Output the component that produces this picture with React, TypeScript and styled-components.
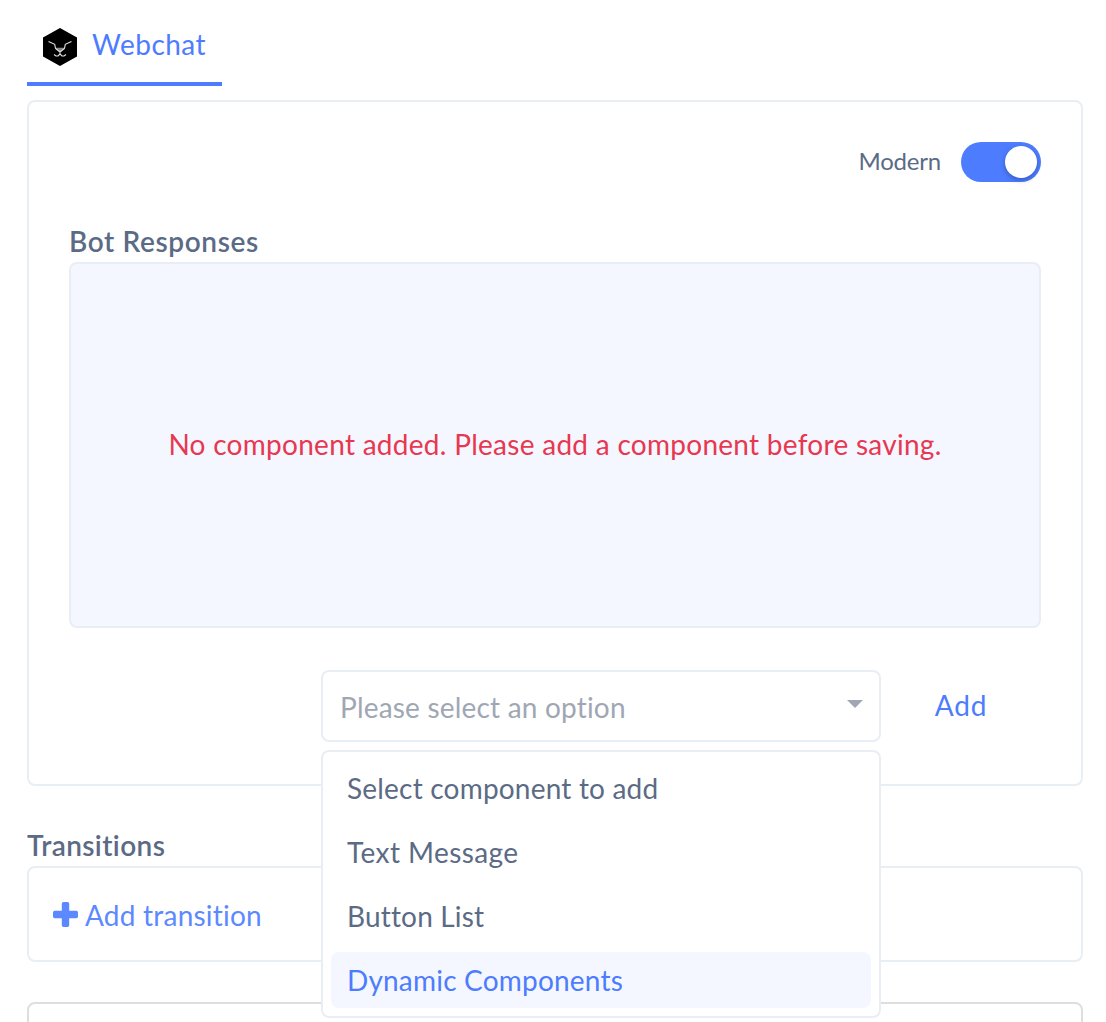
import React, { useState } from "react";
import styled, { createGlobalStyle } from "styled-components";

const ink = "#5b6b85";
const blue = "#4d7cfe";
const line = "#e9edf4";
const tint = "#f4f7ff";

const GlobalStyle = createGlobalStyle`
  * { box-sizing: border-box; }
  body { margin: 0; background: #fff; }
`;

const Page = styled.main`
  height: 1022px;
  overflow: hidden;
  padding: 0 23px 0 27px;
  display: flex;
  flex-direction: column;
  background: #fff;
  color: ${ink};
  font-family: Lato, "Open Sans", sans-serif;
  font-size: 28px;
  line-height: 34px;
  white-space: nowrap;
`;

const Label = styled.span<{ $spacing?: number }>`
  letter-spacing: ${(p) => p.$spacing ?? 0}px;
`;

const Tabs = styled.nav`
  display: flex;
  margin-bottom: 14px;
`;

const Tab = styled.div`
  display: flex;
  width: 195px;
  height: 86px;
  padding: 27px 0 0 15px;
  gap: 14px;
  border-bottom: 4px solid ${blue};
  color: ${blue};
`;

const Panel = styled.section`
  height: 686px;
  padding: 40px;
  border: 2px solid ${line};
  border-radius: 8px;
  flex: none;
`;

const ModeRow = styled.div`
  display: flex;
  justify-content: flex-end;
  align-items: center;
  gap: 20px;
  height: 40px;
  font-size: 24px;

  ${Label} { padding-bottom: 2px; }
`;

const Switch = styled.button`
  display: flex;
  justify-content: flex-end;
  width: 80px;
  height: 40px;
  padding: 4px;
  border: 0;
  border-radius: 20px;
  background: ${blue};
`;

const Knob = styled.span`
  width: 32px;
  height: 32px;
  border-radius: 50%;
  background: #fff;
  box-shadow: 0 2px 5px rgba(20, 40, 110, 0.4);
`;

const Heading = styled.h2`
  margin: 42px 0 4px;
  font-size: 28px;
  line-height: 34px;
  font-weight: 600;
`;

const EmptyState = styled.div`
  display: flex;
  align-items: center;
  justify-content: center;
  height: 366px;
  padding-bottom: 2px;
  border: 2px solid ${line};
  border-radius: 8px;
  background: ${tint};
  color: #e8384f;
`;

const AddRow = styled.div`
  display: flex;
  justify-content: flex-end;
  align-items: flex-start;
  margin-top: 42px;
`;

const SelectWrap = styled.div`
  position: relative;
  width: 560px;
`;

const SelectBox = styled.div`
  display: flex;
  align-items: center;
  justify-content: space-between;
  height: 72px;
  padding: 2px 16px 0 17px;
  border: 2px solid ${line};
  border-radius: 8px;
  color: #a0a7b4;
`;

const Caret = styled.span`
  border: 8px solid transparent;
  border-top-color: #a0a7b4;
  border-bottom: 0;
  margin-bottom: 6px;
`;

const Menu = styled.ul`
  position: absolute;
  z-index: 2;
  top: 80px;
  left: 0;
  width: 560px;
  margin: 0;
  padding: 8px;
  display: flex;
  flex-direction: column;
  gap: 8px;
  list-style: none;
  background: #fff;
  border: 2px solid ${line};
  border-radius: 8px;
`;

const Option = styled.li<{ $active: boolean }>`
  display: flex;
  align-items: center;
  height: 56px;
  padding: 0 16px 1px;
  border-radius: 8px;
  color: ${(p) => (p.$active ? blue : ink)};
  background: ${(p) => (p.$active ? tint : "transparent")};
`;

const AddButton = styled.button`
  width: 160px;
  height: 70px;
  padding: 0;
  border: 0;
  background: none;
  color: ${blue};
  font: inherit;
`;

const Card = styled.section<{ $tone: string }>`
  display: flex;
  align-items: center;
  flex: none;
  height: 96px;
  padding: 0 24px;
  border: 2px solid ${(p) => p.$tone};
  border-radius: 8px;
  margin-bottom: 40px;
`;

const AddTransition = styled.a`
  display: flex;
  align-items: center;
  gap: 7px;
  color: #5c89ff;

  ${Label} { padding-top: 2px; }
`;

const LionLogo = () => (
  <svg width="36" height="40" viewBox="0 0 36 40" fill="none">
    <path d="M18 1 35 10.5v19L18 39 1 29.500V10.500Z" fill="#000" />
    <path d="M13.500 20.800h9v1.500l-3.200 2.500h-2.600l-3.200-2.500Z" fill="#888" />
    <path
      d="M6.500 14.500l6.200 2.800.8 4 3.500 3h2l3.500-3 .8-4 6.200-2.800M18 24.500v2.500l-2 2h-2l-2-1.500M18 27l2 2h2l2-1.500"
      stroke="#e4e4e4"
      strokeWidth="1.100"
    />
  </svg>
);

const PlusIcon = () => (
  <svg width="25" height="25" viewBox="0 0 25 25">
    <path
      d="M10.500 0h4A1.700 1.700 0 0 1 16.200 1.700V8.800H23.300A1.700 1.700 0 0 1 25 10.500v4A1.700 1.700 0 0 1 23.300 16.200H16.200v7.100A1.700 1.700 0 0 1 14.500 25h-4A1.700 1.700 0 0 1 8.800 23.300V16.200H1.700A1.700 1.700 0 0 1 0 14.500v-4A1.700 1.700 0 0 1 1.700 8.800H8.800V1.700A1.700 1.700 0 0 1 10.500 0Z"
      fill="currentColor"
    />
  </svg>
);

const options = [
  { label: "Select component to add", spacing: 0.2 },
  { label: "Text Message", spacing: 0.42 },
  { label: "Button List", spacing: 0.17 },
  { label: "Dynamic Components", spacing: 0.2 },
];

export default function App() {
  const [active, setActive] = useState(3);
  return (
    <Page>
      <GlobalStyle />
      <Tabs>
        <Tab>
          <LionLogo />
          <Label $spacing={0.5}>Webchat</Label>
        </Tab>
      </Tabs>
      <Panel>
        <ModeRow>
          <Label $spacing={-0.2}>Modern</Label>
          <Switch aria-label="Modern">
            <Knob />
          </Switch>
        </ModeRow>
        <Heading>
          <Label $spacing={0.62}>Bot Responses</Label>
        </Heading>
        <EmptyState>
          <Label $spacing={0.28}>No component added. Please add a component before saving.</Label>
        </EmptyState>
        <AddRow>
          <SelectWrap>
            <SelectBox>
              <Label $spacing={0.19}>Please select an option</Label>
              <Caret />
            </SelectBox>
            <Menu>
              {options.map((o, i) => (
                <Option key={o.label} $active={i === active} onMouseEnter={() => setActive(i)}>
                  <Label $spacing={o.spacing}>{o.label}</Label>
                </Option>
              ))}
            </Menu>
          </SelectWrap>
          <AddButton>
            <Label $spacing={0.9}>Add</Label>
          </AddButton>
        </AddRow>
      </Panel>
      <Heading>
        <Label $spacing={0.4}>Transitions</Label>
      </Heading>
      <Card $tone={line}>
        <AddTransition>
          <PlusIcon />
          <Label $spacing={0.22}>Add transition</Label>
        </AddTransition>
      </Card>
      <Card $tone="#dedede" />
    </Page>
  );
}
